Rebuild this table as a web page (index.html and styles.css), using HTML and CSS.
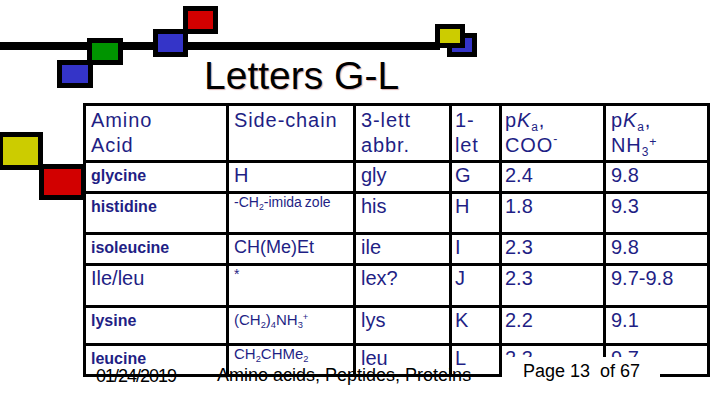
FILE: index.html
```html
<!DOCTYPE html>
<html lang="en">
<head>
<meta charset="utf-8">
<title>Letters G-L</title>
<link rel="stylesheet" href="styles.css">
</head>
<body>
<div class="slide">
  <div class="deco bar"></div>
  <div class="deco sq blue sq-b1"></div>
  <div class="deco sq red sq-r1"></div>
  <div class="deco sq blue sq-b2"></div>
  <div class="deco sq green sq-g1"></div>
  <div class="deco sq blue sq-b3"></div>
  <div class="deco sq yellow sq-y1"></div>
  <div class="deco sq yellow sq-y2"></div>
  <div class="deco sq red sq-r2"></div>

  <h1 class="title">Letters G-L</h1>

  <div class="tablewrap">
    <div class="grid">
      <div class="c hd">Amino<br>Acid</div>
      <div class="c hd">Side-chain</div>
      <div class="c hd">3-lett<br>abbr.</div>
      <div class="c hd">1-<br>let</div>
      <div class="c hd">p<i>K</i><sub>a</sub>,<br>COO<sup class="minus">-</sup></div>
      <div class="c hd">p<i>K</i><sub>a</sub>,<br>NH<sub>3</sub><sup>+</sup></div>

      <div class="c nm">glycine</div>
      <div class="c">H</div>
      <div class="c">gly</div>
      <div class="c">G</div>
      <div class="c">2.4</div>
      <div class="c">9.8</div>

      <div class="c nm">histidine</div>
      <div class="c chem s14 hi">-CH<sub>2</sub>-imida<span class="gap">zole</span></div>
      <div class="c">his</div>
      <div class="c">H</div>
      <div class="c">1.8</div>
      <div class="c">9.3</div>

      <div class="c nm">isoleucine</div>
      <div class="c chem s18">CH(Me)Et</div>
      <div class="c">ile</div>
      <div class="c">I</div>
      <div class="c">2.3</div>
      <div class="c">9.8</div>

      <div class="c">Ile/leu</div>
      <div class="c chem s14 hi">*</div>
      <div class="c">lex?</div>
      <div class="c">J</div>
      <div class="c">2.3</div>
      <div class="c">9.7-9.8</div>

      <div class="c nm">lysine</div>
      <div class="c chem s15">(CH<sub>2</sub>)<sub>4</sub>NH<sub>3</sub><sup>+</sup></div>
      <div class="c">lys</div>
      <div class="c">K</div>
      <div class="c">2.2</div>
      <div class="c">9.1</div>

      <div class="c nm">leucine</div>
      <div class="c chem s15 hi">CH<sub>2</sub>CHMe<sub>2</sub></div>
      <div class="c">leu</div>
      <div class="c">L</div>
      <div class="c">2.3</div>
      <div class="c">9.7</div>
    </div>
  </div>

  <div class="foot date">01/24/2019</div>
  <div class="foot topic">Amino acids, Peptides, Proteins</div>
  <div class="foot page">Page 13&nbsp; of 67</div>
</div>
</body>
</html>
```

FILE: styles.css
```css
html, body {
  margin: 0;
  padding: 0;
  background: #ffffff;
}

.slide {
  position: relative;
  width: 720px;
  height: 405px;
  overflow: hidden;
  background: #ffffff;
  padding-top: 54px;
  box-sizing: border-box;
  font-family: "Liberation Sans", Arial, sans-serif;
}

/* decorative bar and squares */
.deco {
  position: absolute;
  box-sizing: border-box;
}

.bar {
  left: 0;
  top: 42px;
  width: 440px;
  height: 8px;
  background: #000000;
}

.sq {
  border: 5px solid #000000;
}

.red { background: #d20000; }
.blue { background: #3434c8; }
.green { background: #009400; }
.yellow { background: #cccc00; }

.sq-r1 { left: 183px; top: 6px; width: 35px; height: 28px; }
.sq-b1 { left: 153px; top: 29px; width: 35px; height: 28px; }
.sq-g1 { left: 87px; top: 38px; width: 36px; height: 27px; }
.sq-b2 { left: 57px; top: 60px; width: 36px; height: 28px; }
.sq-b3 { left: 447px; top: 33px; width: 30px; height: 24px; }
.sq-y1 { left: 435px; top: 24px; width: 30px; height: 24px; }
.sq-y2 { left: -2px; top: 132px; width: 45px; height: 38px; }
.sq-r2 { left: 39px; top: 164px; width: 47px; height: 36px; }

/* title */
.title {
  position: relative;
  margin: 0 0 0 204px;
  font-size: 39px;
  font-weight: normal;
  line-height: 44px;
  color: #000000;
  text-shadow: 1px 1px 1px #dcb0b0;
}

/* table */
.tablewrap {
  position: relative;
  margin: 5px 0 0 83px;
  width: 627px;
  height: 271px;
  overflow: hidden;
  border-bottom: 3px solid #000000;
}

.grid {
  display: grid;
  grid-template-columns: 140px 124px 93px 47px 101px 101px;
  grid-template-rows: 54px 28px 38px 28px 39px 35px 60px;
  gap: 3px;
  padding: 3px;
  background: #000000;
}

.c {
  background: #ffffff;
  padding: 0 0 0 5px;
  font-size: 20px;
  line-height: 24px;
  color: #1f1f85;
  white-space: nowrap;
}

.c:nth-child(6n+4),
.c:nth-child(6n+5) {
  padding-left: 3px;
}

.hd {
  line-height: 25px;
  padding-top: 2px;
  letter-spacing: 0.9px;
}

.nm {
  font-size: 16px;
  font-weight: bold;
  padding-top: 1px;
}

.chem { font-weight: normal; }
.s14 { font-size: 14px; }
.s15 { font-size: 15px; }
.s18 { font-size: 18px; }
.hi { line-height: 16px; }
.gap { margin-left: 3px; }

sub, sup {
  font-size: 0.62em;
  line-height: 0;
  vertical-align: baseline;
  position: relative;
}

sub { top: 0.32em; }
sup { top: -0.5em; }
sup.minus { top: -0.7em; }

.hd sub { font-size: 0.6em; }

/* footer */
.foot {
  position: absolute;
  font-size: 18px;
  line-height: 20px;
  color: #000000;
}

.date {
  left: 96px;
  top: 366px;
  letter-spacing: -1px;
}

.topic {
  left: 217px;
  top: 365px;
}

.page {
  left: 502px;
  top: 357px;
  width: 158px;
  height: 40px;
  box-sizing: border-box;
  padding: 4px 0 0 21px;
  background: #ffffff;
}
```
